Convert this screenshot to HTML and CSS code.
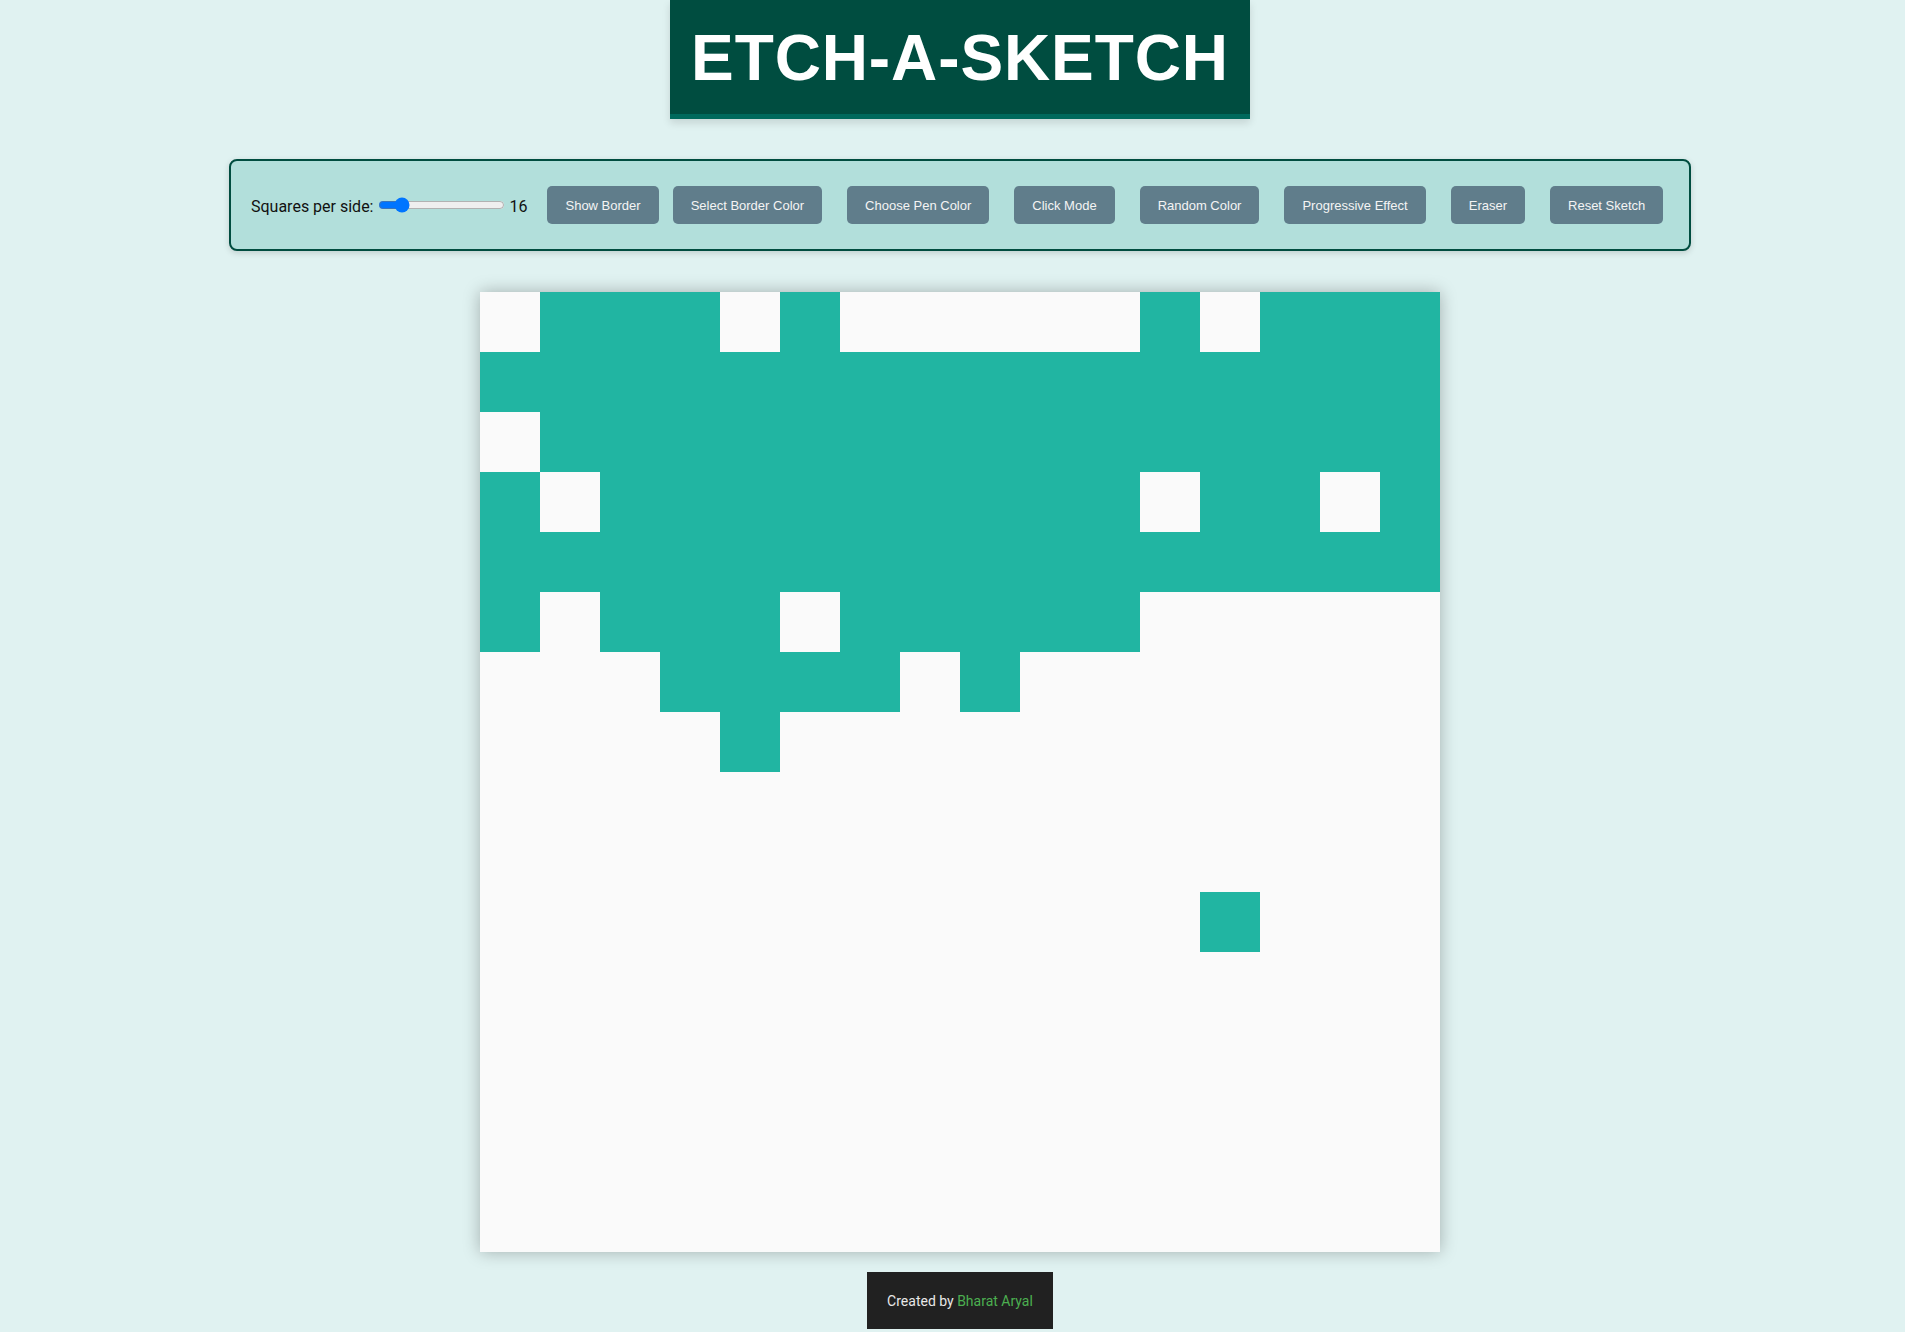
FILE: index.html
```html
<!DOCTYPE html>
<html lang="en">
<head>
<meta charset="UTF-8">
<title>Etch-A-Sketch</title>
<link rel="stylesheet" href="styles.css">
</head>
<body>
<div class="page">
  <header class="title-bar">
    <h1 class="title">ETCH-A-SKETCH</h1>
  </header>
  <section class="controls">
    <div class="size-group">
      <label class="size-label" for="size">Squares per side:</label>
      <input class="size-range" id="size" type="range" min="1" max="100" value="16">
      <span class="size-value">16</span>
    </div>
    <button class="btn btn-first">Show Border</button>
    <button class="btn btn-second">Select Border Color</button>
    <button class="btn">Choose Pen Color</button>
    <button class="btn">Click Mode</button>
    <button class="btn">Random Color</button>
    <button class="btn">Progressive Effect</button>
    <button class="btn">Eraser</button>
    <button class="btn">Reset Sketch</button>
  </section>
  <main class="board">
    <div class="px"></div><div class="px ink"></div><div class="px ink"></div><div class="px ink"></div><div class="px"></div><div class="px ink"></div><div class="px"></div><div class="px"></div><div class="px"></div><div class="px"></div><div class="px"></div><div class="px ink"></div><div class="px"></div><div class="px ink"></div><div class="px ink"></div><div class="px ink"></div>
    <div class="px ink"></div><div class="px ink"></div><div class="px ink"></div><div class="px ink"></div><div class="px ink"></div><div class="px ink"></div><div class="px ink"></div><div class="px ink"></div><div class="px ink"></div><div class="px ink"></div><div class="px ink"></div><div class="px ink"></div><div class="px ink"></div><div class="px ink"></div><div class="px ink"></div><div class="px ink"></div>
    <div class="px"></div><div class="px ink"></div><div class="px ink"></div><div class="px ink"></div><div class="px ink"></div><div class="px ink"></div><div class="px ink"></div><div class="px ink"></div><div class="px ink"></div><div class="px ink"></div><div class="px ink"></div><div class="px ink"></div><div class="px ink"></div><div class="px ink"></div><div class="px ink"></div><div class="px ink"></div>
    <div class="px ink"></div><div class="px"></div><div class="px ink"></div><div class="px ink"></div><div class="px ink"></div><div class="px ink"></div><div class="px ink"></div><div class="px ink"></div><div class="px ink"></div><div class="px ink"></div><div class="px ink"></div><div class="px"></div><div class="px ink"></div><div class="px ink"></div><div class="px"></div><div class="px ink"></div>
    <div class="px ink"></div><div class="px ink"></div><div class="px ink"></div><div class="px ink"></div><div class="px ink"></div><div class="px ink"></div><div class="px ink"></div><div class="px ink"></div><div class="px ink"></div><div class="px ink"></div><div class="px ink"></div><div class="px ink"></div><div class="px ink"></div><div class="px ink"></div><div class="px ink"></div><div class="px ink"></div>
    <div class="px ink"></div><div class="px"></div><div class="px ink"></div><div class="px ink"></div><div class="px ink"></div><div class="px"></div><div class="px ink"></div><div class="px ink"></div><div class="px ink"></div><div class="px ink"></div><div class="px ink"></div><div class="px"></div><div class="px"></div><div class="px"></div><div class="px"></div><div class="px"></div>
    <div class="px"></div><div class="px"></div><div class="px"></div><div class="px ink"></div><div class="px ink"></div><div class="px ink"></div><div class="px ink"></div><div class="px"></div><div class="px ink"></div><div class="px"></div><div class="px"></div><div class="px"></div><div class="px"></div><div class="px"></div><div class="px"></div><div class="px"></div>
    <div class="px"></div><div class="px"></div><div class="px"></div><div class="px"></div><div class="px ink"></div><div class="px"></div><div class="px"></div><div class="px"></div><div class="px"></div><div class="px"></div><div class="px"></div><div class="px"></div><div class="px"></div><div class="px"></div><div class="px"></div><div class="px"></div>
    <div class="px"></div><div class="px"></div><div class="px"></div><div class="px"></div><div class="px"></div><div class="px"></div><div class="px"></div><div class="px"></div><div class="px"></div><div class="px"></div><div class="px"></div><div class="px"></div><div class="px"></div><div class="px"></div><div class="px"></div><div class="px"></div>
    <div class="px"></div><div class="px"></div><div class="px"></div><div class="px"></div><div class="px"></div><div class="px"></div><div class="px"></div><div class="px"></div><div class="px"></div><div class="px"></div><div class="px"></div><div class="px"></div><div class="px"></div><div class="px"></div><div class="px"></div><div class="px"></div>
    <div class="px"></div><div class="px"></div><div class="px"></div><div class="px"></div><div class="px"></div><div class="px"></div><div class="px"></div><div class="px"></div><div class="px"></div><div class="px"></div><div class="px"></div><div class="px"></div><div class="px ink"></div><div class="px"></div><div class="px"></div><div class="px"></div>
    <div class="px"></div><div class="px"></div><div class="px"></div><div class="px"></div><div class="px"></div><div class="px"></div><div class="px"></div><div class="px"></div><div class="px"></div><div class="px"></div><div class="px"></div><div class="px"></div><div class="px"></div><div class="px"></div><div class="px"></div><div class="px"></div>
    <div class="px"></div><div class="px"></div><div class="px"></div><div class="px"></div><div class="px"></div><div class="px"></div><div class="px"></div><div class="px"></div><div class="px"></div><div class="px"></div><div class="px"></div><div class="px"></div><div class="px"></div><div class="px"></div><div class="px"></div><div class="px"></div>
    <div class="px"></div><div class="px"></div><div class="px"></div><div class="px"></div><div class="px"></div><div class="px"></div><div class="px"></div><div class="px"></div><div class="px"></div><div class="px"></div><div class="px"></div><div class="px"></div><div class="px"></div><div class="px"></div><div class="px"></div><div class="px"></div>
    <div class="px"></div><div class="px"></div><div class="px"></div><div class="px"></div><div class="px"></div><div class="px"></div><div class="px"></div><div class="px"></div><div class="px"></div><div class="px"></div><div class="px"></div><div class="px"></div><div class="px"></div><div class="px"></div><div class="px"></div><div class="px"></div>
    <div class="px"></div><div class="px"></div><div class="px"></div><div class="px"></div><div class="px"></div><div class="px"></div><div class="px"></div><div class="px"></div><div class="px"></div><div class="px"></div><div class="px"></div><div class="px"></div><div class="px"></div><div class="px"></div><div class="px"></div><div class="px"></div>
  </main>
  <footer class="footer">Created by <a class="author" href="#">Bharat Aryal</a></footer>
</div>
</body>
</html>
```

FILE: styles.css
```css
html, body {
  margin: 0;
  padding: 0;
}

body {
  background: #e0f2f1;
  font-family: Roboto, "Noto Sans", sans-serif;
  color: #111;
}

.page {
  display: flex;
  flex-direction: column;
  align-items: center;
  padding-left: 15px;
}

.title-bar {
  background: #004d40;
  border-bottom: 5px solid #00695c;
  box-shadow: 0 4px 8px rgba(0, 0, 0, 0.12);
  width: 580px;
  box-sizing: border-box;
  padding: 21px 0 19px;
  text-align: center;
}

.title {
  margin: 0;
  color: #ffffff;
  font-family: "Liberation Sans", Arial, sans-serif;
  font-weight: 700;
  font-size: 64px;
  letter-spacing: 0.9px;
  line-height: 74px;
}

.controls {
  margin-top: 40px;
  width: 1462px;
  height: 92px;
  box-sizing: border-box;
  background: #b2dfdb;
  border: 2px solid #004d40;
  border-radius: 8px;
  box-shadow: 0 2px 6px rgba(0, 0, 0, 0.15);
  display: flex;
  align-items: center;
  padding: 0 0 0 20px;
  white-space: nowrap;
}

.size-group {
  display: flex;
  align-items: center;
  flex-shrink: 0;
}

.size-label {
  font-size: 16px;
  color: #111;
  margin-right: 4px;
  position: relative;
  top: 1px;
}

.size-range {
  width: 127px;
  margin: 0;
  flex-shrink: 0;
}

.size-value {
  font-size: 16px;
  margin-left: 5px;
  position: relative;
  top: 1px;
}

.btn {
  flex-shrink: 0;
  white-space: nowrap;
  font-family: "Liberation Sans", Arial, sans-serif;
  font-size: 13px;
  color: #f4f4f4;
  background: #607d8b;
  border: none;
  border-radius: 5px;
  height: 38px;
  padding: 0 18px;
  margin-left: 25px;
  cursor: pointer;
}

.btn-first {
  margin-left: 20px;
}

.btn-second {
  margin-left: 14px;
}

.board {
  margin-top: 41px;
  width: 960px;
  height: 960px;
  display: grid;
  grid-template-columns: repeat(16, 60px);
  grid-template-rows: repeat(16, 60px);
  background: #fafafa;
  box-shadow: 0 0 16px rgba(0, 0, 0, 0.28);
}

.px {
  background: #fafafa;
}

.px.ink {
  background: #21b5a2;
}

.footer {
  margin-top: 20px;
  background: #212121;
  color: #e8e8e8;
  font-size: 14px;
  padding: 21px 20px 20px;
}

.author {
  color: #4caf50;
  text-decoration: none;
}
```
